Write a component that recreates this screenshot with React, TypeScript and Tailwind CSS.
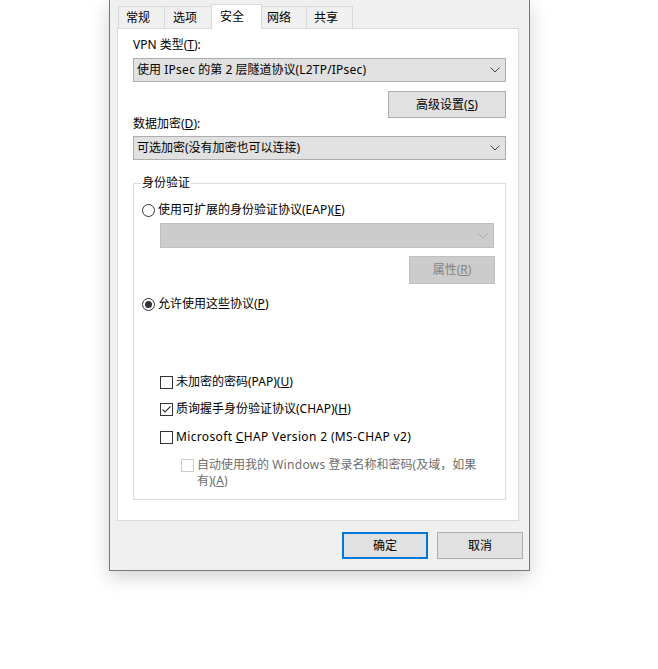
import React from 'react';

const tabs = [
  { label: '常规', w: 'w-[47px]', pl: 'pl-[7px]' },
  { label: '选项', w: 'w-[48px]', pl: 'pl-[8px]' },
  { label: '安全', w: 'w-[51px]', pl: 'pl-[8px]', active: true },
  { label: '网络', w: 'w-[46px]', pl: 'pl-[5px]' },
  { label: '共享', w: 'w-[47px]', pl: 'pl-[7px]' },
];

function Chevron({ disabled }: { disabled?: boolean }) {
  return (
    <svg width="10" height="6" viewBox="0 0 10 6" className="shrink-0">
      <polyline
        points="0.5,0.5 5,5 9.5,0.5"
        fill="none"
        stroke={disabled ? '#a8a8a8' : '#444'}
        strokeWidth="1"
      />
    </svg>
  );
}

function Select({ children }: { children: React.ReactNode }) {
  return (
    <div className="flex h-[24px] items-center justify-between border border-[#adadad] bg-[#e1e1e1] pl-[3px] pr-[5px]">
      <span>{children}</span>
      <Chevron />
    </div>
  );
}

function Radio({ checked }: { checked?: boolean }) {
  return (
    <span className="flex size-[13px] shrink-0 items-center justify-center rounded-full border border-[#333] bg-white">
      {checked && <span className="size-[7px] rounded-full bg-[#333]" />}
    </span>
  );
}

function Checkbox({ checked, disabled }: { checked?: boolean; disabled?: boolean }) {
  return (
    <span
      className={
        disabled
          ? 'flex size-[13px] shrink-0 border border-[#cccccc] bg-white'
          : 'flex size-[13px] shrink-0 items-center justify-center border border-[#333] bg-white'
      }
    >
      {checked && (
        <svg width="11" height="11" viewBox="0 0 11 11">
          <polyline points="1.5,5.5 4,8 9.5,2.5" fill="none" stroke="#333" strokeWidth="1.1" />
        </svg>
      )}
    </span>
  );
}

function Check({ checked, children }: { checked?: boolean; children: React.ReactNode }) {
  return (
    <div className="ml-[26px] flex h-[16px] items-center gap-[3px]">
      <Checkbox checked={checked} />
      <span>{children}</span>
    </div>
  );
}

export default function App() {
  return (
    <div className="h-[669px] w-[658px] overflow-hidden bg-white font-['Noto_Sans','Noto_Sans_CJK_SC',sans-serif] text-[12px] leading-[16px] text-black">
      <div className="ml-[109px] flex h-[571px] w-[421px] flex-col border-x border-b border-[#777777] bg-[#f0f0f0] shadow-[0_6px_18px_rgba(0,0,0,0.18)]">
        {/* tab strip */}
        <div className="flex h-[28px] items-end pl-[8px]">
          {tabs.map((t) =>
            t.active ? (
              <div
                key={t.label}
                className={`relative z-10 -mb-px -ml-px flex h-[25px] items-start border-x border-t border-[#d9d9d9] bg-white pt-[4px] ${t.w} ${t.pl}`}
              >
                {t.label}
              </div>
            ) : (
              <div
                key={t.label}
                className={`-ml-px flex h-[22px] items-start border-x border-t border-[#d9d9d9] bg-[#f0f0f0] pt-[3px] first:ml-0 ${t.w} ${t.pl}`}
              >
                {t.label}
              </div>
            )
          )}
        </div>

        {/* tab panel */}
        <div className="ml-[7px] flex h-[493px] w-[402px] flex-col border border-[#d9d9d9] bg-white pl-[15px] pr-[12px]">
          <div className="mt-[8px]">
            VPN 类型(<u>T</u>):
          </div>
          <div className="mt-[5px]">
            <Select>
              使用 <span className="tracking-[0.3px]">IPsec</span> 的第 2 层隧道协议
              <span className="tracking-[0.2px]">(L2TP/IPsec)</span>
            </Select>
          </div>
          <div className="mt-[9px] flex justify-end">
            <button className="h-[27px] w-[118px] border border-[#adadad] bg-[#e1e1e1]">
              高级设置(<u>S</u>)
            </button>
          </div>
          <div className="-mt-[2px]">
            数据加密(<u>D</u>):
          </div>
          <div className="mt-[4px]">
            <Select>可选加密(没有加密也可以连接)</Select>
          </div>

          <fieldset className="mt-[15px] h-[325px] border border-[#dcdcdc] pb-[10px]">
            <legend className="ml-[7px] px-[1px]">身份验证</legend>

            <div className="ml-[8px] mt-[11px] flex h-[16px] items-center gap-[3px]">
              <Radio />
              <span>
                使用可扩展的身份验证协议(EAP)(<u>E</u>)
              </span>
            </div>
            <div className="ml-[26px] mr-[11px] mt-[5px] flex h-[25px] items-center justify-end border border-[#bfbfbf] bg-[#cccccc] pr-[5px]">
              <Chevron disabled />
            </div>
            <div className="mr-[10px] mt-[8px] flex justify-end">
              <button className="h-[28px] w-[86px] border border-[#bfbfbf] bg-[#cccccc] text-[#838383]">
                属性(<u>R</u>)
              </button>
            </div>

            <div className="ml-[8px] mt-[12px] flex h-[16px] items-center gap-[3px]">
              <Radio checked />
              <span>
                允许使用这些协议(<u>P</u>)
              </span>
            </div>

            <div className="mt-[62px]">
              <Check>
                未加密的密码(PAP)(<u>U</u>)
              </Check>
            </div>
            <div className="mt-[11px]">
              <Check checked>
                质询握手身份验证协议(CHAP)(<u>H</u>)
              </Check>
            </div>
            <div className="mt-[12px]">
              <Check>
                <span className="tracking-[0.35px]">
                  Microsoft <u>C</u>HAP Version 2 (MS-CHAP v2)
                </span>
              </Check>
            </div>
            <div className="ml-[47px] mt-[12px] flex gap-[3px] text-[#6d6d6d]">
              <span className="mt-[2px]">
                <Checkbox disabled />
              </span>
              <span>
                自动使用我的 <span className="tracking-[0.3px]">Windows</span> 登录名称和密码(及域，如果
                <br />
                有)(<u>A</u>)
              </span>
            </div>
          </fieldset>
        </div>

        {/* dialog buttons */}
        <div className="mt-[11px] flex justify-end gap-[9px] pr-[6px]">
          <button className="h-[27px] w-[86px] border-2 border-[#0078d7] bg-[#e1e1e1]">确定</button>
          <button className="h-[27px] w-[86px] border border-[#adadad] bg-[#e1e1e1]">取消</button>
        </div>
      </div>
    </div>
  );
}
